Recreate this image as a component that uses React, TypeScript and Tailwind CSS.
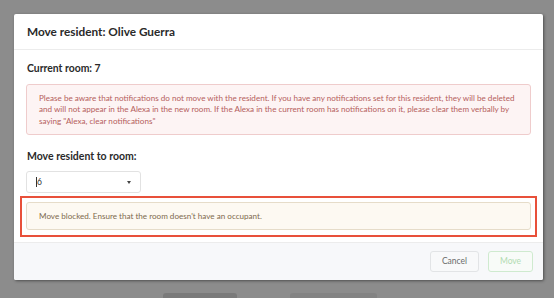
import React from "react";

export default function App() {
  return (
    <div
      className="relative w-[554px] h-[298px] bg-[#8c8c8c] overflow-hidden"
      style={{ fontFamily: "Lato, 'Open Sans', sans-serif" }}
    >
      <div className="absolute left-[163px] top-[293px] w-[74px] h-[10px] rounded-t-[3px] bg-[#7a7a7a]" />
      <div className="absolute left-[290px] top-[293px] w-[87px] h-[10px] rounded-t-[3px] bg-[#838383]" />
      <div className="absolute left-[14px] top-[14px] w-[529px] h-[266px] bg-white rounded-[2px] shadow-[1px_1px_3px_rgba(0,0,0,0.45)] flex flex-col overflow-hidden">
        <div className="h-[36px] shrink-0 border-b border-[#ececec] flex items-center px-[13px]">
          <span className="text-[11.8px] font-bold text-[#2a2a2a]">Move resident: Olive Guerra</span>
        </div>
        <div className="flex-1 px-[12px] pt-[12px]">
          <div className="text-[10.4px] font-bold text-[#2a2a2a] leading-[13px] pl-[1px]">Current room: 7</div>
          <div className="mt-[9px] w-[505px] h-[51px] border border-[#efcccc] bg-[#fdf4f4] rounded-[3px] px-[12px] pt-[8px] text-[8.1px] leading-[11.3px] text-[#b5605c]">
            Please be aware that notifications do not move with the resident. If you have any notifications set for this resident, they will be deleted and will not appear in the Alexa in the new room. If the Alexa in the current room has notifications on it, please clear them verbally by saying "Alexa, clear notifications"
          </div>
          <div className="mt-[15px] text-[10.5px] font-bold text-[#2a2a2a] leading-[13px] pl-[1px]">Move resident to room:</div>
          <div className="mt-[8px] w-[115px] h-[22px] border border-[#e2e2e2] rounded-[3px] flex items-center pl-[9px] pr-[9px]">
            <span className="w-px h-[10px] bg-[#333]" />
            <span className="text-[8.5px] text-[#333]">6</span>
            <span className="ml-auto w-0 h-0 border-l-[2.5px] border-r-[2.5px] border-t-[3px] border-l-transparent border-r-transparent border-t-[#444]" />
          </div>
          <div className="mt-[3px] ml-[-6px] w-[517px] h-[41px] border-2 border-[#e8503a] px-[4px] pt-[4px] pb-[5px]">
            <div className="h-full border border-[#e6dcc9] bg-[#fdf9f2] rounded-[3px] flex items-center pl-[12px] text-[8.1px] text-[#7d6a4e]">
              Move blocked. Ensure that the room doesn't have an occupant.
            </div>
          </div>
        </div>
        <div className="h-[38px] shrink-0 bg-[#f7f8fa] border-t border-[#ececec] flex items-center justify-end gap-[9px] pr-[10px]">
          <button className="w-[49px] h-[21px] border border-[#e2e4e6] bg-[#f8f9fa] rounded-[3px] text-[8.5px] text-[#6b6b6b]">Cancel</button>
          <button className="w-[45px] h-[21px] border border-[#cfeacf] bg-[#f8fbf8] rounded-[3px] text-[8.5px] text-[#b2dcb2]">Move</button>
        </div>
      </div>
    </div>
  );
}
